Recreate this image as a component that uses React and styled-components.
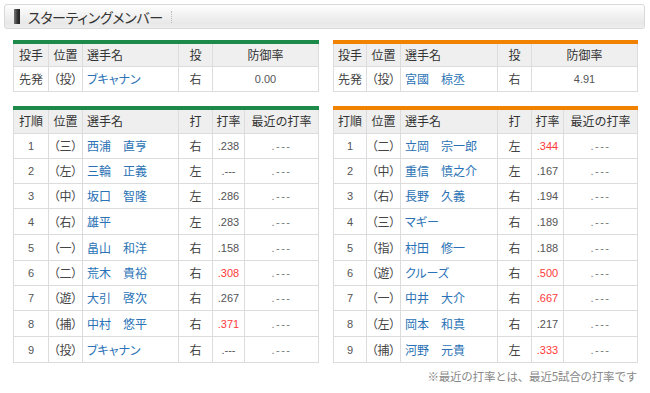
import styled, { createGlobalStyle } from "styled-components";

const GlobalStyle = createGlobalStyle`
  body {
    margin: 0;
    background: #fff;
    font-family: "Noto Sans CJK JP", "Liberation Sans", sans-serif;
    color: #333;
  }
`

const Page = styled.div`
  width: 650px;
  padding: 4px 0 0 4px;
  box-sizing: border-box;
`

const TitleBar = styled.div`
  width: 641px;
  height: 25px;
  box-sizing: border-box;
  border: 1px solid #d9d9d9;
  border-radius: 3px;
  background: linear-gradient(#fefefe 0%, #f4f4f4 35%, #e8e8e8 80%, #eeeeee 100%);
  display: flex;
  align-items: center;
  padding-left: 9px;
`

const TitleMark = styled.div`
  width: 6px;
  height: 15px;
  background: linear-gradient(90deg, #777, #333 60%, #222);
`

const TitleText = styled.span`
  margin-left: 8px;
  font-size: 14px;
  line-height: 1;
  color: #333;
  font-feature-settings: "palt";
  letter-spacing: -0.3px;
`

const TitleSep = styled.span`
  margin-left: 8px;
  height: 12px;
  border-left: 1px dotted #bbb;
`

const Columns = styled.div`
  display: grid;
  grid-template-columns: 305px 304px;
  column-gap: 15px;
  margin: 11px 0 0 9px;
`

const Column = styled.div`
  display: flex;
  flex-direction: column;
`

const Table = styled.table`
  width: 100%;
  border-collapse: collapse;
  table-layout: fixed;
  border-top: 4px solid ${p => p.$accent};
  margin-top: ${p => p.$gap || 0}px;
`

const Col = styled.col`
  width: ${p => p.$w}px;
`

const Th = styled.th`
  box-sizing: border-box;
  height: ${p => p.$h || 24}px;
  padding: 0;
  background: #efefef;
  border: 1px solid #dcdcdc;
  border-top: none;
  font-size: 12px;
  line-height: 14px;
  font-weight: normal;
  color: #333;
  text-align: ${p => (p.$left ? "left" : "center")};
  padding-left: ${p => (p.$left ? "4px" : "0")};
  white-space: nowrap;
`

const Tr = styled.tr`
  height: ${p => p.$h || 25}px;
`

const Td = styled.td`
  box-sizing: border-box;
  padding: 0;
  border: 1px solid #dcdcdc;
  font-size: 12px;
  line-height: 14px;
  color: #444;
  text-align: center;
  white-space: nowrap;
`

const NumTd = styled(Td)`
  font-family: "Liberation Sans", sans-serif;
  font-size: 11px;
  color: ${p => (p.$hot ? "#ff3a3a" : "#555")};
`

const DashTd = styled(NumTd)`
  letter-spacing: 1.5px;
  color: #777;
`

const PosTd = styled(Td)`
  font-feature-settings: "palt";
  color: #444;
`

const NameTd = styled(Td)`
  text-align: left;
  padding-left: 4px;
  color: #2a72b5;
  font-feature-settings: "palt";
`

const Note = styled.div`
  margin-top: 6px;
  text-align: right;
  font-size: 11.5px;
  line-height: 14px;
  color: #888;
  letter-spacing: -0.2px;
`

const GREEN = "#1e8a4a"
const ORANGE = "#f08200"

const ROW_H = [25, 25, 25, 26, 26, 25, 25, 26, 26]

const pitchers = {
  home: { name: "ブキャナン", hand: "右", era: "0.00" },
  away: { name: "宮國　椋丞", hand: "右", era: "4.91" },
}

const lineups = {
  home: [
    ["（三）", "西浦　直亨", "右", ".238"],
    ["（左）", "三輪　正義", "左", ".---"],
    ["（中）", "坂口　智隆", "左", ".286"],
    ["（右）", "雄平", "左", ".283"],
    ["（一）", "畠山　和洋", "右", ".158"],
    ["（二）", "荒木　貴裕", "右", ".308", true],
    ["（遊）", "大引　啓次", "右", ".267"],
    ["（捕）", "中村　悠平", "右", ".371", true],
    ["（投）", "ブキャナン", "右", ".---"],
  ],
  away: [
    ["（二）", "立岡　宗一郎", "左", ".344", true],
    ["（中）", "重信　慎之介", "左", ".167"],
    ["（右）", "長野　久義", "右", ".194"],
    ["（三）", "マギー", "右", ".189"],
    ["（指）", "村田　修一", "右", ".188"],
    ["（遊）", "クルーズ", "右", ".500", true],
    ["（一）", "中井　大介", "右", ".667", true],
    ["（左）", "岡本　和真", "右", ".217"],
    ["（捕）", "河野　元貴", "左", ".333", true],
  ],
}

const PitcherTable = ({ accent, widths, p }) => (
  <Table $accent={accent}>
    <colgroup>
      {widths.map((w, i) => <Col key={i} $w={w} />)}
    </colgroup>
    <thead>
      <tr>
        <Th>投手</Th>
        <Th>位置</Th>
        <Th $left>選手名</Th>
        <Th>投</Th>
        <Th>防御率</Th>
      </tr>
    </thead>
    <tbody>
      <Tr>
        <Td>先発</Td>
        <PosTd>（投）</PosTd>
        <NameTd>{p.name}</NameTd>
        <Td>{p.hand}</Td>
        <NumTd>{p.era}</NumTd>
      </Tr>
    </tbody>
  </Table>
)

const LineupTable = ({ accent, widths, rows }) => (
  <Table $accent={accent} $gap={14}>
    <colgroup>
      {widths.map((w, i) => <Col key={i} $w={w} />)}
    </colgroup>
    <thead>
      <tr>
        <Th $h={26}>打順</Th>
        <Th $h={26}>位置</Th>
        <Th $h={26} $left>選手名</Th>
        <Th $h={26}>打</Th>
        <Th $h={26}>打率</Th>
        <Th $h={26}>最近の打率</Th>
      </tr>
    </thead>
    <tbody>
      {rows.map(([pos, name, hand, avg, hot], i) => (
        <Tr key={i} $h={ROW_H[i]}>
          <NumTd>{i + 1}</NumTd>
          <PosTd>{pos}</PosTd>
          <NameTd>{name}</NameTd>
          <Td>{hand}</Td>
          <NumTd $hot={hot}>{avg}</NumTd>
          <DashTd>.---</DashTd>
        </Tr>
      ))}
    </tbody>
  </Table>
)

export default function App() {
  return (
    <>
      <GlobalStyle />
      <Page>
        <TitleBar>
          <TitleMark />
          <TitleText>スターティングメンバー</TitleText>
          <TitleSep />
        </TitleBar>
        <Columns>
          <Column>
            <PitcherTable accent={GREEN} widths={[35, 34, 96, 34, 106]} p={pitchers.home} />
            <LineupTable accent={GREEN} widths={[35, 34, 96, 34, 32, 74]} rows={lineups.home} />
          </Column>
          <Column>
            <PitcherTable accent={ORANGE} widths={[33, 34, 97, 34, 106]} p={pitchers.away} />
            <LineupTable accent={ORANGE} widths={[33, 34, 97, 34, 32, 74]} rows={lineups.away} />
            <Note>※最近の打率とは、最近5試合の打率です</Note>
          </Column>
        </Columns>
      </Page>
    </>
  )
}
